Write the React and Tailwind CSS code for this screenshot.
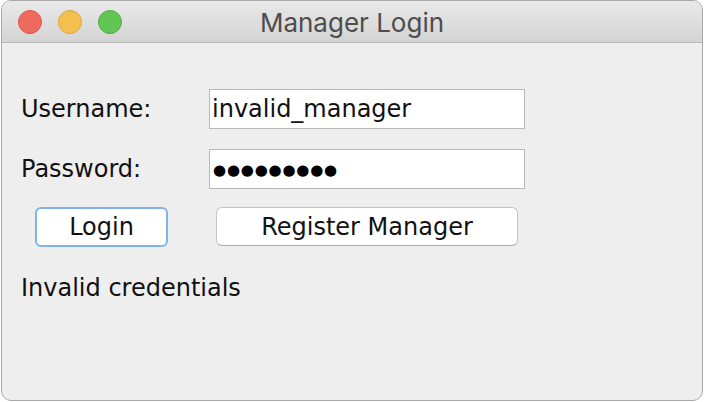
import React from "react";

export default function App() {
  const sans = { fontFamily: '"DejaVu Sans", "Liberation Sans", sans-serif' };
  return (
    <div className="w-[704px] h-[402px] bg-white overflow-hidden">
      <div
        className="ml-[1px] w-[702px] h-[401px] rounded-[10px] border border-[#a9a9a9] overflow-hidden bg-[#eeeeee] flex flex-col"
        style={sans}
      >
        {/* Title bar */}
        <div className="relative h-[42px] shrink-0 border-b border-[#b9b9b9] bg-gradient-to-b from-[#e9e9e9] to-[#d4d4d4] flex items-center justify-center pt-[2px]">
          <div className="absolute left-[16px] top-[9px] flex gap-[16px]">
            <span className="block w-[24px] h-[24px] rounded-full bg-[#ee6a5f] border border-[#d9574c]" />
            <span className="block w-[24px] h-[24px] rounded-full bg-[#f5bf4f] border border-[#dba63f]" />
            <span className="block w-[24px] h-[24px] rounded-full bg-[#62c655] border border-[#52ab45]" />
          </div>
          <span
            className="text-[26px] leading-[32px] text-[#4d4d4d]"
            style={{ fontFamily: 'Inter, "Noto Sans", sans-serif' }}
          >
            Manager Login
          </span>
        </div>

        {/* Content */}
        <div className="flex flex-col pl-[19px] pt-[46px] text-[24px] leading-[28px] text-[#111]">
          <div className="flex items-center h-[40px]">
            <span className="w-[188px]">Username:</span>
            <div className="w-[316px] h-[40px] bg-white border border-[#b8b8b8] flex items-center pl-[2px]">
              invalid_manager
            </div>
          </div>
          <div className="flex items-center h-[40px] mt-[20px]">
            <span className="w-[188px]">Password:</span>
            <div className="w-[316px] h-[40px] bg-white border border-[#b8b8b8] flex items-center pl-[3px] pt-[1px] text-[15px] tracking-[0.8px] text-black">
              ●●●●●●●●●
            </div>
          </div>
          <div className="flex items-start mt-[18px] pl-[14px] gap-[48px]">
            <div className="w-[133px] h-[40px] bg-white rounded-[6px] border-2 border-[#80b3ec] flex items-center justify-center">
              Login
            </div>
            <div className="w-[302px] h-[39px] bg-white rounded-[6px] border border-[#c4c4c4] border-b-[#a9a9a9] flex items-center justify-center">
              Register Manager
            </div>
          </div>
          <div className="mt-[27px]">Invalid credentials</div>
        </div>
      </div>
    </div>
  );
}
